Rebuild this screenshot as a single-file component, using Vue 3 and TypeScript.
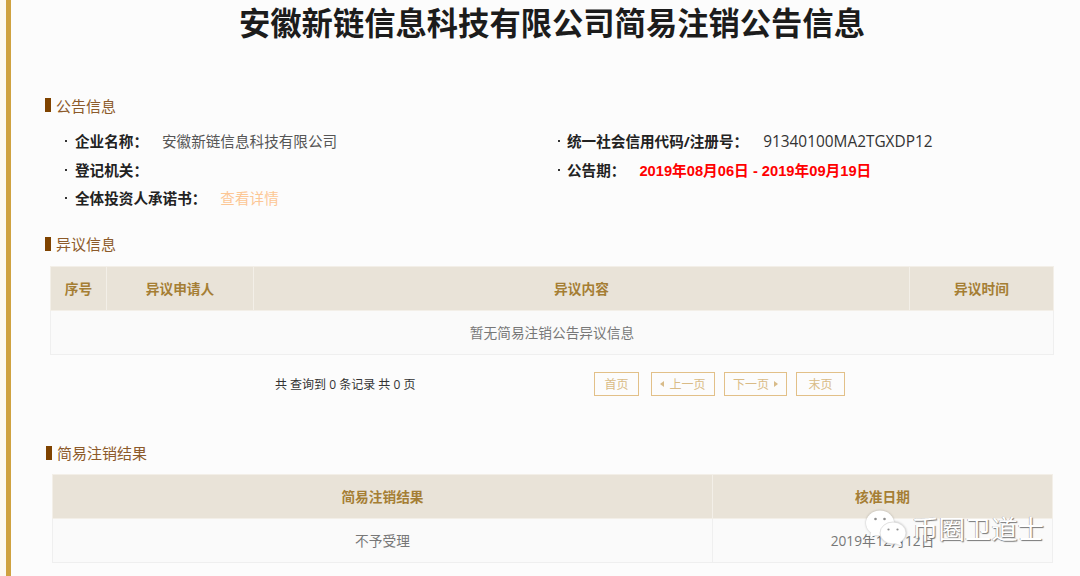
<script setup lang="ts">
const infoLeft = [
  { label: "企业名称：", value: "安徽新链信息科技有限公司" },
  { label: "登记机关：", value: "" },
  { label: "全体投资人承诺书：", value: "查看详情", link: true },
];
const infoRight = [
  { label: "统一社会信用代码/注册号：", value: "91340100MA2TGXDP12", code: true },
  { label: "公告期：", value: "2019年08月06日 - 2019年09月19日", red: true },
];
</script>

<template>
  <div class="page">
    <div class="edge" />
    <main class="content">
      <h1 class="title">安徽新链信息科技有限公司简易注销公告信息</h1>

      <h2 class="heading first"><i />公告信息</h2>
      <div class="info">
        <ul class="info-col">
          <li v-for="row in infoLeft" :key="row.label">
            <b>{{ row.label }}</b>
            <span :class="{ link: row.link }">{{ row.value }}</span>
          </li>
        </ul>
        <ul class="info-col right">
          <li v-for="row in infoRight" :key="row.label">
            <b>{{ row.label }}</b>
            <span :class="{ red: row.red, code: row.code }">{{ row.value }}</span>
          </li>
        </ul>
      </div>

      <h2 class="heading second"><i />异议信息</h2>
      <table class="grid objection">
        <thead>
          <tr>
            <th class="c-no">序号</th>
            <th class="c-man">异议申请人</th>
            <th>异议内容</th>
            <th class="c-time">异议时间</th>
          </tr>
        </thead>
        <tbody>
          <tr><td colspan="4">暂无简易注销公告异议信息</td></tr>
        </tbody>
      </table>

      <div class="pager">
        <span class="total">共 查询到 0 条记录 共 0 页</span>
        <div class="btns">
          <a class="btn first-btn">首页</a>
          <a class="btn prev"><em class="tri left" />上一页</a>
          <a class="btn next">下一页<em class="tri right-tri" /></a>
          <a class="btn last">末页</a>
        </div>
      </div>

      <h2 class="heading third"><i />简易注销结果</h2>
      <table class="grid result">
        <thead>
          <tr>
            <th>简易注销结果</th>
            <th class="c-date">核准日期</th>
          </tr>
        </thead>
        <tbody>
          <tr>
            <td>不予受理</td>
            <td>2019年12月12日</td>
          </tr>
        </tbody>
      </table>
    </main>

    <div class="mark">
      <svg class="wechat" width="44" height="40" viewBox="0 0 44 40">
        <ellipse cx="16" cy="15" rx="14" ry="12.5" fill="#fff" />
        <path d="M7 24 L6 30 L13 26 Z" fill="#fff" />
        <ellipse cx="29" cy="25" rx="13" ry="11" fill="#fff" stroke="#d8d8d8" stroke-width="0.8" />
        <path d="M36 33 L38 38 L31 35 Z" fill="#fff" />
        <circle cx="11.5" cy="11" r="1.3" fill="#8f8f8f" />
        <circle cx="20.5" cy="11" r="1.3" fill="#8f8f8f" />
        <circle cx="24.5" cy="21.5" r="1.1" fill="#8f8f8f" />
        <circle cx="33.5" cy="21.5" r="1.1" fill="#8f8f8f" />
      </svg>
      <span class="mark-text">币圈卫道士</span>
    </div>
  </div>
</template>

<style scoped>
.page {
  position: relative;
  display: flex;
  width: 1080px;
  height: 576px;
  overflow: hidden;
  background: #fcfcfc;
  color: #222;
  font-family: "Open Sans", "Noto Sans CJK SC", sans-serif;
}

.edge {
  flex: none;
  width: 6px;
  height: 100%;
  background: #fdf9f1;
  border-right: 5px solid #cfa240;
}

.content {
  flex: 1;
  min-width: 0;
}

.title {
  margin: 0 0 0 13px;
  height: 47px;
  font-size: 31.3px;
  line-height: 47px;
  font-weight: 700;
  text-align: center;
  color: #1c1c1c;
}

.heading {
  display: flex;
  align-items: center;
  margin: 0 0 0 34px;
  height: 22px;
  font-size: 15px;
  font-weight: 400;
  color: #8c5a2a;
}

.heading i {
  width: 6px;
  height: 14px;
  margin-right: 5px;
  background: #7f4300;
}

.heading.first {
  margin-top: 47px;
}

.heading.second {
  margin-top: 20px;
}

.heading.third {
  margin-top: 46px;
  margin-left: 35px;
}

.info {
  display: flex;
  margin-top: 11px;
  margin-left: 55px;
}

.info-col {
  width: 491px;
  margin: 0;
  padding: 0;
  list-style: none;
}

.info-col li {
  position: relative;
  display: flex;
  align-items: baseline;
  height: 28.5px;
  padding-left: 9px;
  font-size: 14.6px;
  line-height: 28.5px;
  white-space: nowrap;
}

.info-col li::before {
  content: "";
  position: absolute;
  left: -1px;
  top: 13px;
  width: 2px;
  height: 2px;
  background: #333;
}

.info-col.right li {
  padding-left: 10px;
}

.info-col.right li::before {
  left: 1px;
}

.info-col b {
  margin-right: 8px;
  font-weight: 700;
  color: #222;
}

.info-col span {
  margin-left: 6px;
  color: #555;
}

.info-col span.link {
  color: #fcc795;
}

.info-col span.code {
  font-size: 15.4px;
  margin-left: 7px;
  color: #333;
}

.info-col span.red {
  font-family: "Liberation Sans", "Noto Sans CJK SC", sans-serif;
  font-size: 14.7px;
  font-weight: 700;
  color: #ff0000;
}

.grid {
  table-layout: fixed;
  border-collapse: collapse;
}

.grid th,
.grid td {
  height: 43px;
  padding: 0;
  text-align: center;
  font-size: 13.7px;
  border: 1px solid #efefef;
}

.grid th {
  background: #e9e3d8;
  color: #a57e34;
  font-weight: 700;
  border-color: #f3efe8;
}

.grid td {
  background: #fafafa;
  color: #777;
}

.objection {
  width: 1004px;
  margin: 11px 0 0 39px;
}

.c-no {
  width: 55px;
}

.c-man {
  width: 146px;
}

.c-time {
  width: 143px;
}

.result {
  width: 1001px;
  margin: 10px 0 0 41px;
}

.c-date {
  width: 339px;
}

.pager {
  display: flex;
  align-items: center;
  height: 24px;
  margin-top: 17px;
  font-size: 12px;
}

.total {
  width: 319px;
  margin-left: 264px;
  color: #333;
  white-space: nowrap;
}

.btns {
  display: flex;
}

.btn {
  display: flex;
  align-items: center;
  justify-content: center;
  box-sizing: border-box;
  height: 24px;
  border: 1px solid #e2c088;
  font-size: 12px;
  color: #d9bb86;
}

.first-btn {
  width: 45px;
  margin-right: 12px;
}

.prev {
  width: 64px;
  margin-right: 9px;
}

.next {
  width: 63px;
  margin-right: 9px;
}

.last {
  width: 49px;
}

.tri {
  width: 0;
  height: 0;
  border-top: 3px solid transparent;
  border-bottom: 3px solid transparent;
}

.tri.left {
  margin-right: 5px;
  border-right: 4px solid #d8bb88;
}

.tri.right-tri {
  margin-left: 5px;
  border-left: 4px solid #d8bb88;
}

/* watermark sits over the result table */
.mark {
  position: absolute;
  left: 864px;
  top: 507px;
  display: flex;
  align-items: center;
}

.wechat {
  filter: drop-shadow(0 0 1px rgba(0, 0, 0, 0.25));
}

.mark-text {
  margin: 2px 0 0 4px;
  font-size: 26.4px;
  line-height: 40px;
  color: #fff;
  white-space: nowrap;
  text-shadow: 1px 1px 1px #777, -0.5px -0.5px 0.5px #999;
}
</style>

<style>
html,
body {
  margin: 0;
  background: #fcfcfc;
}
</style>
